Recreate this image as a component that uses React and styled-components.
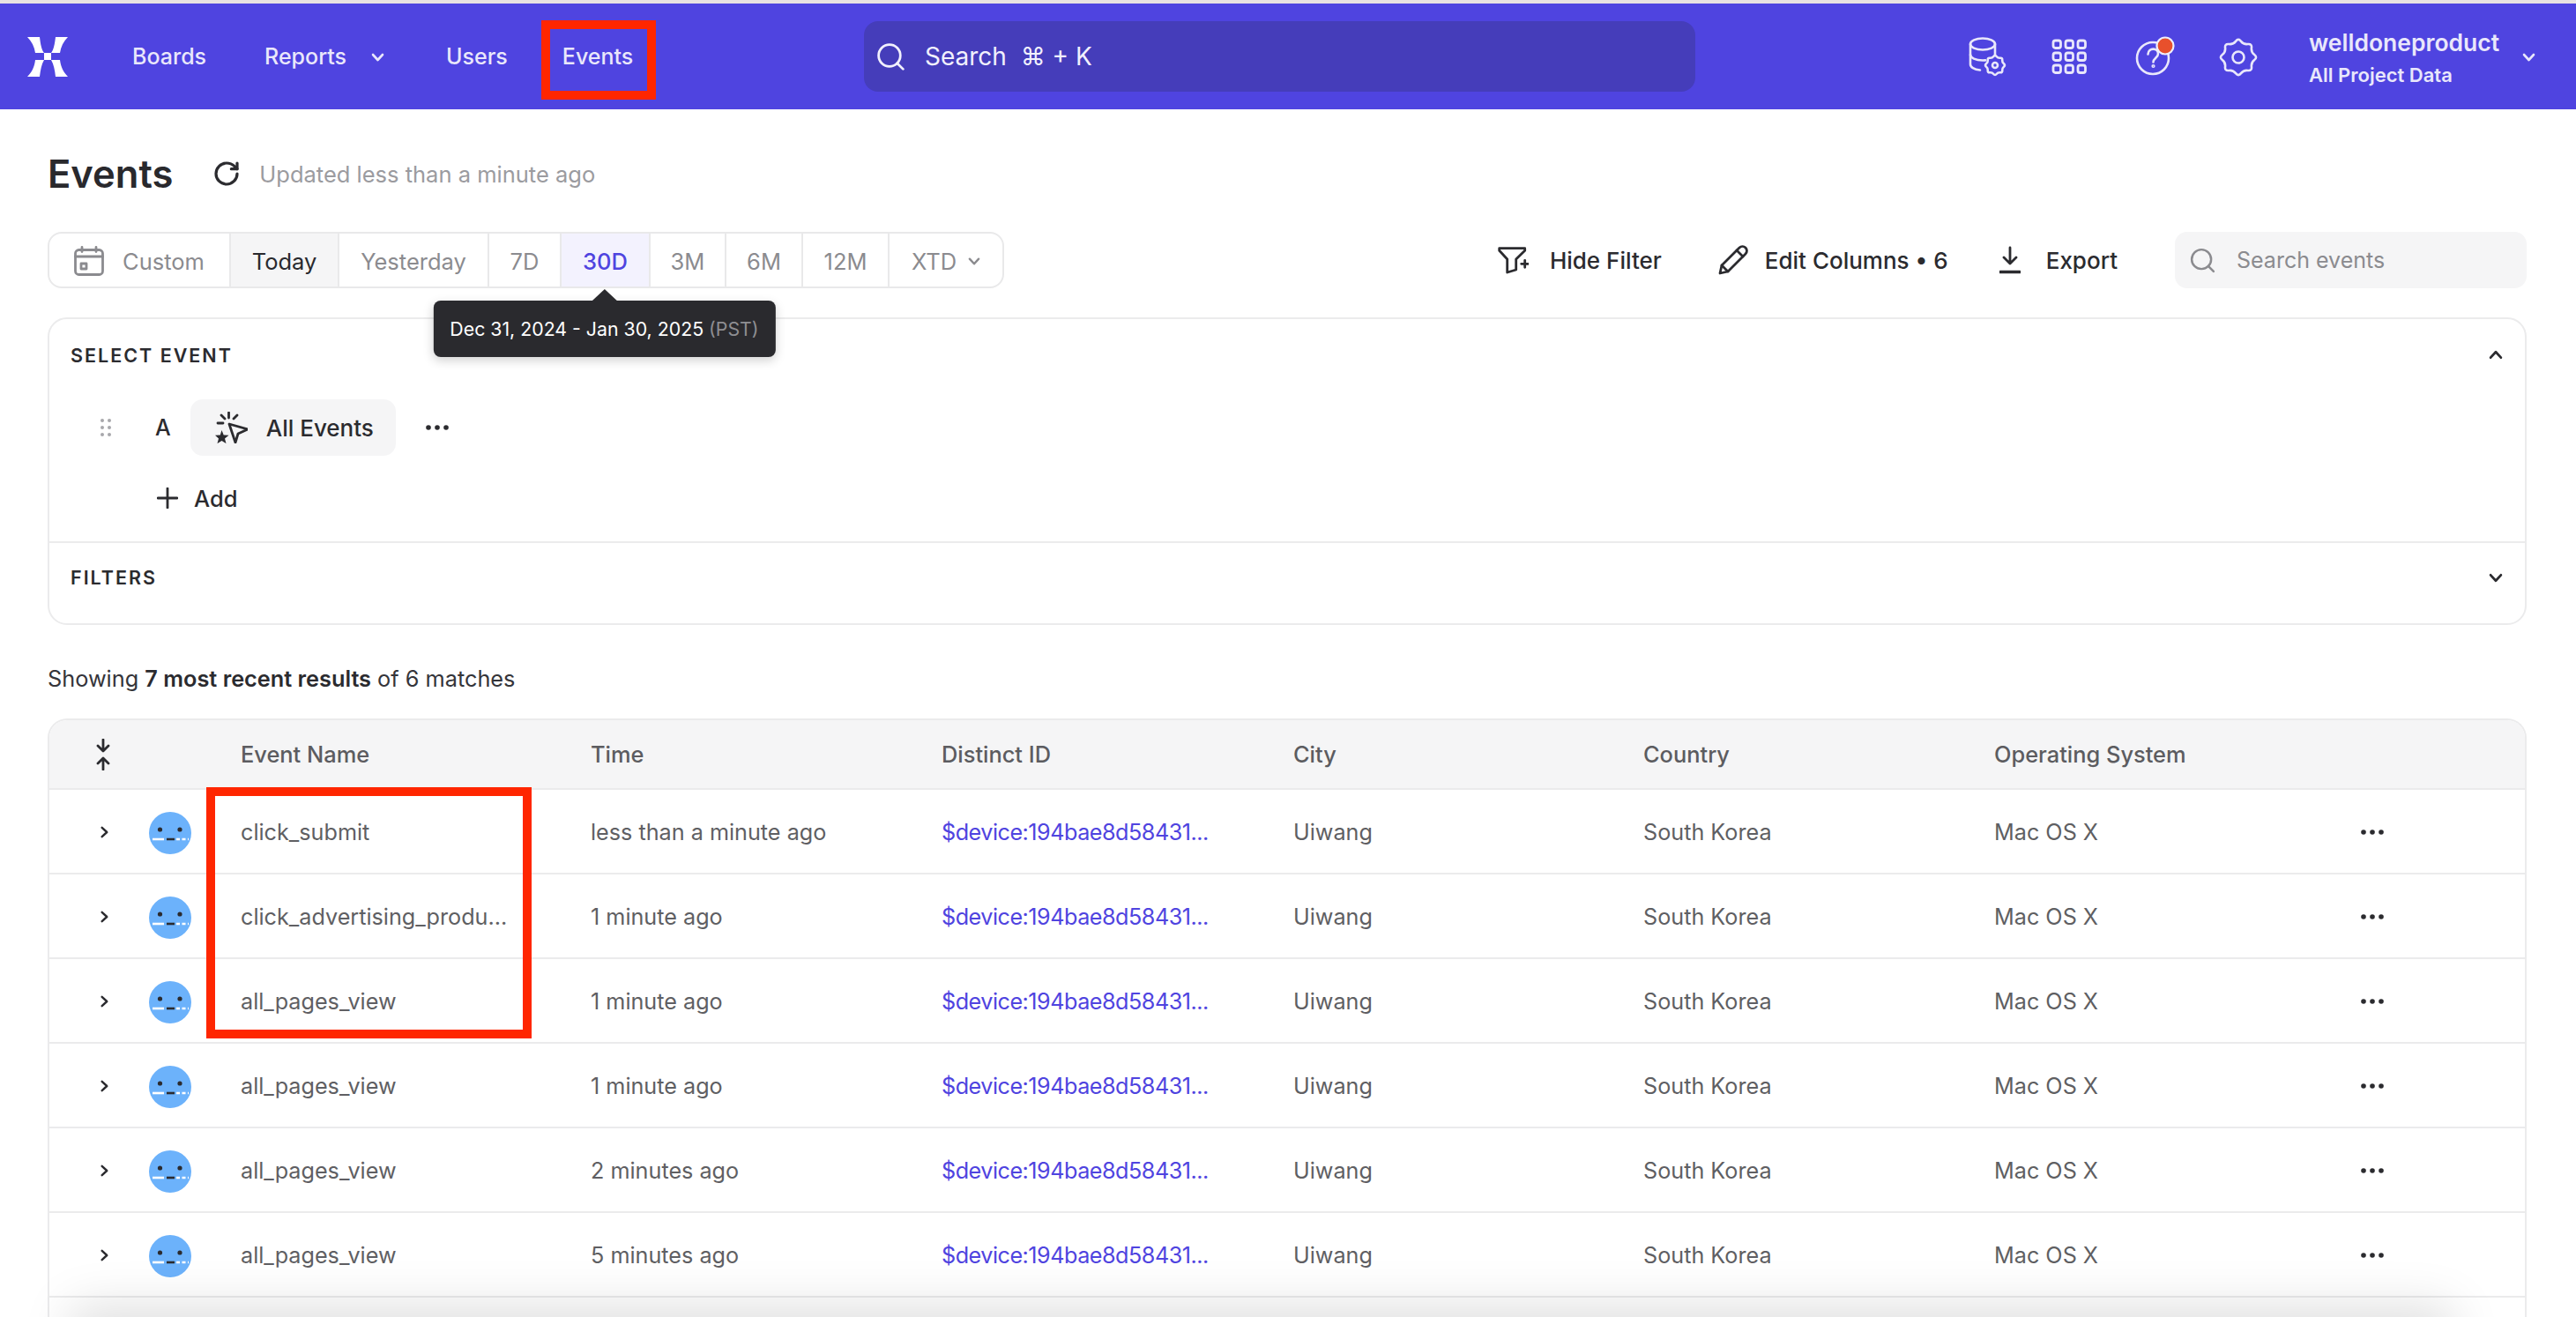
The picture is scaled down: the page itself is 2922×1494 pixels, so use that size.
import React from "react";
import styled, { createGlobalStyle } from "styled-components";
import { RotateCw, Search } from "lucide-react";

const Global = createGlobalStyle`
  html, body { margin: 0; padding: 0; background: #fff; }
  body { font-family: Inter, "Noto Sans", sans-serif; color: #2b2b2f; }
  * { box-sizing: border-box; }
`;

const gearPath = (cx, cy, R, r, n) => {
  const pts = [];
  for (let i = 0; i < n * 2; i++) {
    const a = (i * Math.PI) / n - Math.PI / 2;
    const rad = i % 2 === 0 ? R : r;
    pts.push([cx + rad * Math.cos(a), cy + rad * Math.sin(a)]);
  }
  const mid = (p, q) => [(p[0] + q[0]) / 2, (p[1] + q[1]) / 2];
  const start = mid(pts[pts.length - 1], pts[0]);
  let d = `M${start[0].toFixed(2)} ${start[1].toFixed(2)}`;
  pts.forEach((p, i) => {
    const m = mid(p, pts[(i + 1) % pts.length]);
    d += `Q${p[0].toFixed(2)} ${p[1].toFixed(2)} ${m[0].toFixed(2)} ${m[1].toFixed(2)}`;
  });
  return d + "Z";
};

const Page = styled.div`
  position: relative;
  width: 2922px;
  height: 1494px;
  overflow: hidden;
  border-top: 4px solid #e8e2e2;
`;

const Header = styled.header`
  display: flex;
  align-items: center;
  height: 120px;
  background: #4f44e0;
  color: #e9e7fb;
  padding-left: 31px;
  padding-right: 46px;
`;

const Left = styled.div`
  display: flex;
  align-items: center;
  width: 949px;
  flex: none;
`;

const Logo = styled.svg`
  width: 46px;
  height: 45px;
  margin-right: 73px;
  fill: #fff;
`;

const Nav = styled.nav`
  display: flex;
  align-items: center;
  gap: 66px;
  font-size: 25px;
  font-weight: 500;
`;

const NavItem = styled.span`
  display: flex;
  align-items: center;
  gap: 28px;
  margin-right: ${(p) => p.$after || 0}px;
`;

const SearchBox = styled.div`
  display: flex;
  align-items: center;
  gap: 20px;
  width: 943px;
  height: 80px;
  flex: none;
  padding-left: 12px;
  border-radius: 16px;
  background: #453dba;
  color: #f1f0fd;
  font-size: 28px;
`;

const HeaderRight = styled.div`
  display: flex;
  align-items: center;
  margin-left: auto;
`;

const HeaderIcons = styled.div`
  display: flex;
  align-items: center;
  gap: 54px;
  margin-right: 59px;
`;

const HeaderIcon = styled.svg`
  display: block;
  width: 42px;
  height: 46px;
  overflow: visible;
  fill: none;
  stroke: #e9e7fb;
  stroke-width: 2.6;
  stroke-linecap: round;
  stroke-linejoin: round;
`;

const UserBlock = styled.div`
  display: flex;
  flex-direction: column;
  gap: 8px;
  width: 242px;
  margin-top: 3px;
`;

const UserName = styled.span`
  font-size: 26.5px;
  line-height: 30px;
  font-weight: 600;
`;

const UserProject = styled.span`
  font-size: 22px;
  line-height: 28px;
  font-weight: 600;
`;

const Chevron = styled.svg`
  display: block;
  flex: none;
  width: ${(p) => p.$size || 15}px;
  height: ${(p) => p.$size || 15}px;
  fill: none;
  stroke: ${(p) => p.$color || "currentColor"};
  stroke-width: 2.6;
  stroke-linecap: round;
  stroke-linejoin: round;
  transform: rotate(${(p) => p.$turn || 0}deg);
`;

const Main = styled.main`
  padding: 0 56px 0 54px;
`;

const TitleRow = styled.div`
  display: flex;
  align-items: center;
  height: 60px;
  margin-top: 43px;
`;

const Title = styled.h1`
  margin: 0 45px 0 0;
  font-size: 43.5px;
  font-weight: 600;
  color: #29292d;
`;

const Updated = styled.span`
  margin-left: 21px;
  font-size: 25.5px;
  color: #9b9b9f;
`;

const Toolbar = styled.div`
  display: flex;
  align-items: center;
  height: 64px;
  margin-top: 36px;
`;

const Segments = styled.div`
  display: flex;
  height: 64px;
  border: 2px solid #e9e9ea;
  border-radius: 16px;
  font-size: 25.5px;
  color: #8b8b8f;
`;

const Segment = styled.div`
  position: relative;
  display: flex;
  align-items: center;
  justify-content: center;
  gap: ${(p) => p.$gap || 0}px;
  width: ${(p) => p.$w}px;
  padding-top: 2px;
  border-right: ${(p) => (p.$last ? "none" : "2px solid #e9e9ea")};
  background: ${(p) => (p.$today ? "#f5f5f6" : p.$selected ? "#f3f2fe" : "transparent")};
  color: ${(p) => (p.$today ? "#29292d" : p.$selected ? "#4f44e0" : "inherit")};
  font-weight: ${(p) => (p.$selected ? 500 : 400)};
`;

const Tooltip = styled.div`
  position: absolute;
  top: 76px;
  left: calc(50% - 1px);
  transform: translateX(-50%);
  z-index: 3;
  padding: 0 19px;
  height: 64px;
  display: flex;
  align-items: center;
  gap: 6px;
  white-space: nowrap;
  border-radius: 8px;
  background: #2a2a2e;
  box-shadow: 0 4px 12px rgba(0, 0, 0, 0.18);
  color: #fff;
  font-size: 21.3px;
  font-weight: 400;

  &::before {
    content: "";
    position: absolute;
    top: -13px;
    left: 50%;
    margin-left: -15px;
    border-left: 15px solid transparent;
    border-right: 15px solid transparent;
    border-bottom: 14px solid #2a2a2e;
  }
`;

const TooltipZone = styled.span`
  color: #8e8e92;
`;

const Tools = styled.div`
  display: flex;
  align-items: center;
  margin-left: auto;
  font-size: 26px;
  font-weight: 500;
  color: #2b2b2f;
`;

const Tool = styled.span`
  display: flex;
  align-items: center;
  gap: ${(p) => p.$gap || 20}px;
  margin-right: ${(p) => p.$after || 0}px;
`;

const ToolIcon = styled.svg`
  display: block;
  flex: none;
  fill: none;
  stroke: ${(p) => p.$stroke || "#2b2b2f"};
  stroke-width: 2.8;
  stroke-linecap: round;
  stroke-linejoin: round;
`;

const EventSearch = styled.div`
  display: flex;
  align-items: center;
  gap: 22px;
  width: 399px;
  height: 64px;
  padding-left: 15px;
  border-radius: 14px;
  background: #f5f5f6;
  color: #8b8b8f;
  font-size: 25px;
  font-weight: 400;
`;

const Panel = styled.section`
  margin-top: 33px;
  height: 349px;
  border: 2px solid #ebebec;
  border-radius: 22px;
`;

const PanelSelect = styled.div`
  height: 254px;
  border-bottom: 2px solid #ebebec;
`;

const PanelHeading = styled.div`
  display: flex;
  align-items: center;
  justify-content: space-between;
  height: ${(p) => p.$height}px;
  padding: 0 25px 0 24px;
  font-size: 21.5px;
  font-weight: 600;
  letter-spacing: 2px;
  color: #2b2b2f;
`;

const QueryRow = styled.div`
  display: flex;
  align-items: center;
  height: 64px;
  margin-top: 10px;
  padding-left: 58px;
  font-size: 25px;
  color: #2b2b2f;
`;

const QueryLetter = styled.span`
  margin: 0 22px 0 50px;
  font-weight: 500;
`;

const EventPill = styled.div`
  display: flex;
  align-items: center;
  gap: 21px;
  width: 233px;
  height: 64px;
  padding-left: 28px;
  border-radius: 14px;
  background: #f5f5f6;
  font-size: 26px;
  font-weight: 500;
`;

const Dots = styled.svg`
  display: block;
  width: 26px;
  height: 6px;
  flex: none;
  fill: #2b2b2f;
  margin-left: ${(p) => p.$left || 0}px;
`;

const AddRow = styled.div`
  display: flex;
  align-items: center;
  gap: 18px;
  height: 40px;
  margin-top: 28px;
  padding-left: 122px;
  font-size: 25.5px;
  font-weight: 500;
`;

const ShowingLine = styled.p`
  margin: 46px 0 0;
  height: 30px;
  line-height: 30px;
  font-size: 25.3px;
  color: #35353a;

  b {
    font-weight: 600;
    color: #2b2b2f;
  }
`;

const Table = styled.div`
  margin-top: 30px;
  border: 2px solid #ebebec;
  border-bottom: none;
  border-radius: 22px 22px 0 0;
  overflow: hidden;
`;

const Columns = `
  display: grid;
  grid-template-columns: 217px 397px 398px 399px 397px 398px 398px 1fr;
  align-items: center;
`;

const HeadRow = styled.div`
  ${Columns}
  height: 79px;
  background: #f5f5f6;
  border-bottom: 2px solid #ebebec;
  font-size: 25.4px;
  font-weight: 500;
  color: #5c5c60;
`;

const Row = styled.div`
  ${Columns}
  height: 96px;
  padding-top: 1px;
  border-bottom: 2px solid #ebebec;
  font-size: 25.2px;
  color: #5f5f63;
`;

const LeadCell = styled.div`
  display: flex;
  align-items: center;
  padding-left: 55px;
  gap: 44px;
`;

const HeadLead = styled.div`
  padding-left: 53px;
`;

const Avatar = styled.svg`
  display: block;
  width: 48px;
  height: 48px;
  margin-top: 3px;
  flex: none;
`;

const Cell = styled.span`
  white-space: nowrap;
`;

const DeviceLink = styled.a`
  color: #4f44e0;
  white-space: nowrap;
  letter-spacing: -0.5px;
`;

const ActionsCell = styled.div`
  padding-left: 18px;
`;

const Marker = styled.div`
  position: absolute;
  z-index: 4;
  top: ${(p) => p.$top}px;
  left: ${(p) => p.$left}px;
  width: ${(p) => p.$w}px;
  height: ${(p) => p.$h}px;
  border: 10px solid #ff2600;
`;

const BottomShade = styled.div`
  position: absolute;
  z-index: 5;
  left: 110px;
  right: 170px;
  bottom: -28px;
  height: 10px;
  box-shadow: 0 0 55px 30px rgba(0, 0, 0, 0.13);
`;

const ChevronDown = (props) => (
  <Chevron viewBox="0 0 15 15" {...props}>
    <path d="M2 5l5.5 6L13 5" />
  </Chevron>
);

const MoreDots = ({ left }) => (
  <Dots viewBox="0 0 26 6" $left={left}>
    <circle cx="3" cy="3" r="2.8" />
    <circle cx="13" cy="3" r="2.8" />
    <circle cx="23" cy="3" r="2.8" />
  </Dots>
);

const FaceAvatar = () => (
  <Avatar viewBox="0 0 48 48">
    <circle cx="24" cy="24" r="24" fill="#6cb2fb" />
    <circle cx="12.5" cy="20" r="2.6" fill="#2b2b2f" />
    <circle cx="35" cy="20" r="2.6" fill="#2b2b2f" />
    <path d="M4 31h13" stroke="#fff" strokeWidth="2.6" />
    <path d="M20 31h9" stroke="#2b2b2f" strokeWidth="2.6" />
    <path d="M31 31h14" stroke="#fff" strokeWidth="2.6" strokeDasharray="4 2.5" />
  </Avatar>
);

const rows = [
  ["click_submit", "less than a minute ago"],
  ["click_advertising_produ...", "1 minute ago"],
  ["all_pages_view", "1 minute ago"],
  ["all_pages_view", "1 minute ago"],
  ["all_pages_view", "2 minutes ago"],
  ["all_pages_view", "5 minutes ago"],
];

export default function App() {
  return (
    <Page>
      <Global />
      <Header>
        <Left>
          <Logo viewBox="0 0 46 45">
            <path d="M0 0h14c1 8 2 14 5 18H9C8 11 5 5 0 0z" />
            <path d="M46 0H32c-1 8-2 14-5 18h10c1-7 4-13 9-18z" />
            <path d="M0 45h14c1-8 2-14 5-19H9c-1 8-4 14-9 19z" />
            <path d="M46 45H32c-1-8-2-14-5-19h10c1 8 4 14 9 19z" />
            <rect x="19" y="18" width="8" height="8" />
          </Logo>
          <Nav>
            <NavItem>Boards</NavItem>
            <NavItem $after={4}>
              Reports
              <ChevronDown />
            </NavItem>
            <NavItem $after={-4}>Users</NavItem>
            <NavItem>Events</NavItem>
          </Nav>
        </Left>
        <SearchBox>
          <Search size={37} strokeWidth={1.8} color="#f1f0fd" />
          <span>Search &nbsp;⌘ + K</span>
        </SearchBox>
        <HeaderRight>
          <HeaderIcons>
            <HeaderIcon viewBox="-3 0 42 46">
              <ellipse cx="16" cy="9" rx="14" ry="6.5" />
              <path d="M2 9v23c0 3 4 6 11 6.5" />
              <path d="M30 9v12" />
              <path d="M2 21c0 3.5 6 6.5 14 6.5 1 0 2 0 3-.1" />
              <path d={gearPath(30, 33, 12, 8.6, 8)} />
              <circle cx="30" cy="33" r="3" />
            </HeaderIcon>
            <HeaderIcon viewBox="0 0 42 46">
              {[0, 1, 2].map((r) =>
                [0, 1, 2].map((c) => (
                  <rect key={`${r}${c}`} x={3 + c * 14} y={5 + r * 14} width="8.5" height="8.5" rx="2.5" strokeWidth="2.8" />
                ))
              )}
            </HeaderIcon>
            <HeaderIcon viewBox="0 0 42 46">
              <circle cx="20" cy="25" r="18" />
              <path d="M14.5 20.5c.5-8 11.5-7.5 11.5-.5 0 4.5-5.5 5-5.5 9.5" />
              <circle cx="20.5" cy="34" r="0.8" />
              <circle cx="34" cy="11" r="9.5" fill="#e8502c" stroke="#efeefc" strokeWidth="2.2" />
            </HeaderIcon>
            <HeaderIcon viewBox="0 0 42 46">
              <path d={gearPath(21, 24, 22, 15.5, 8)} />
              <circle cx="21" cy="24" r="6.5" />
            </HeaderIcon>
          </HeaderIcons>
          <UserBlock>
            <UserName>welldoneproduct</UserName>
            <UserProject>All Project Data</UserProject>
          </UserBlock>
          <ChevronDown />
        </HeaderRight>
      </Header>

      <Main>
        <TitleRow>
          <Title>Events</Title>
          <RotateCw size={32} strokeWidth={2.4} color="#2b2b2f" />
          <Updated>Updated less than a minute ago</Updated>
        </TitleRow>

        <Toolbar>
          <Segments>
            <Segment $w={206} $gap={21}>
              <ToolIcon viewBox="0 0 34 34" width="34" height="34" $stroke="#8b8b8f">
                <rect x="1.5" y="4.5" width="31" height="28" rx="4" />
                <path d="M1.5 12h31M9 1.5v5M25 1.5v5" />
                <rect x="8" y="20" width="6" height="6" />
              </ToolIcon>
              Custom
            </Segment>
            <Segment $w={123} $today>Today</Segment>
            <Segment $w={170}>Yesterday</Segment>
            <Segment $w={82}>7D</Segment>
            <Segment $w={101} $selected>
              30D
              <Tooltip>
                Dec 31, 2024 - Jan 30, 2025 <TooltipZone>(PST)</TooltipZone>
              </Tooltip>
            </Segment>
            <Segment $w={86}>3M</Segment>
            <Segment $w={87}>6M</Segment>
            <Segment $w={98}>12M</Segment>
            <Segment $w={128} $last $gap={13}>
              XTD
              <ChevronDown $size={14} />
            </Segment>
          </Segments>
          <Tools>
            <Tool $gap={24} $after={63}>
              <ToolIcon viewBox="0 0 36 32" width="36" height="32">
                <path d="M2.7 2.7h29v2.5L21.7 15v12l-10 3V15L2.7 5.2z" />
                <path d="M27.7 20.3h8M31.7 16.3v8" />
              </ToolIcon>
              Hide Filter
            </Tool>
            <Tool $gap={18} $after={58}>
              <ToolIcon viewBox="0 0 36 36" width="36" height="36">
                <path d="M3 33l2-9L25 4a4.9 4.9 0 0 1 7 7L12 31z" />
                <path d="M5 24l7 7M22 7l7 7" />
              </ToolIcon>
              Edit Columns • 6
            </Tool>
            <Tool $gap={29} $after={65}>
              <ToolIcon viewBox="0 0 24 32" width="24" height="32">
                <path d="M12 2v18M5 13l7 7 7-7" />
                <path d="M1 29.5h22" strokeWidth="3.4" />
              </ToolIcon>
              Export
            </Tool>
            <EventSearch>
              <Search size={33} strokeWidth={1.8} color="#8b8b8f" />
              <span>Search events</span>
            </EventSearch>
          </Tools>
        </Toolbar>

        <Panel>
          <PanelSelect>
            <PanelHeading $height={81}>
              SELECT EVENT
              <ChevronDown $size={16} $turn={180} $color="#2b2b2f" />
            </PanelHeading>
            <QueryRow>
              <svg width="12" height="20" viewBox="0 0 12 20" fill="#a8a8ac">
                {[2, 10, 18].map((y) => (
                  <g key={y}>
                    <circle cx="2" cy={y} r="2" />
                    <circle cx="10" cy={y} r="2" />
                  </g>
                ))}
              </svg>
              <QueryLetter>A</QueryLetter>
              <EventPill>
                <ToolIcon viewBox="0 0 37 36" width="37" height="36" strokeWidth="2.6">
                  <path d="M16 14l21 6-11 5-3 10z" />
                  <path d="M15.5 1v6M7 4l4 4M25 4l-4 4M3 13h6" />
                  <path
                    d="M7.5 21l2.2 5.4 5.8.4-4.5 3.7 1.5 5.6-5-3.1-5 3.1 1.5-5.6L0 26.8l5.8-.4z"
                    fill="#2b2b2f"
                    stroke="none"
                  />
                </ToolIcon>
                All Events
              </EventPill>
              <MoreDots left={34} />
            </QueryRow>
            <AddRow>
              <ToolIcon viewBox="0 0 24 24" width="24" height="24" strokeWidth="2.4">
                <path d="M12 1v22M1 12h22" />
              </ToolIcon>
              Add
            </AddRow>
          </PanelSelect>
          <PanelHeading $height={77}>
            FILTERS
            <ChevronDown $size={16} $color="#2b2b2f" />
          </PanelHeading>
        </Panel>

        <ShowingLine>
          Showing <b>7 most recent results</b> of 6 matches
        </ShowingLine>

        <Table>
          <HeadRow>
            <HeadLead>
              <ToolIcon viewBox="0 0 16 36" width="16" height="36" strokeWidth="2.6">
                <path d="M8 1v12M2 8l6 6 6-6" />
                <path d="M8 35V23M2 28l6-6 6 6" />
              </ToolIcon>
            </HeadLead>
            <Cell>Event Name</Cell>
            <Cell>Time</Cell>
            <Cell>Distinct ID</Cell>
            <Cell>City</Cell>
            <Cell>Country</Cell>
            <Cell>Operating System</Cell>
          </HeadRow>
          {rows.map(([name, time], i) => (
            <Row key={i}>
              <LeadCell>
                <ChevronDown $size={14} $turn={-90} $color="#2b2b2f" />
                <FaceAvatar />
              </LeadCell>
              <Cell>{name}</Cell>
              <Cell>{time}</Cell>
              <DeviceLink>$device:194bae8d58431...</DeviceLink>
              <Cell>Uiwang</Cell>
              <Cell>South Korea</Cell>
              <Cell>Mac OS X</Cell>
              <ActionsCell>
                <MoreDots />
              </ActionsCell>
            </Row>
          ))}
          <Row />
        </Table>
      </Main>

      <Marker $top={19} $left={614} $w={130} $h={90} />
      <Marker $top={889} $left={234} $w={369} $h={285} />
      <BottomShade />
    </Page>
  );
}
